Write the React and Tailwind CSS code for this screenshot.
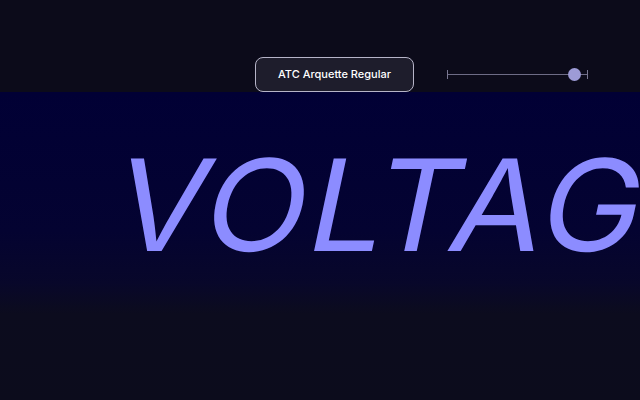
const App = () => {
  return (
    <div className="w-[640px] h-[400px] overflow-hidden bg-[#0c0b1a] font-['Inter','Liberation_Sans',sans-serif]">
      {/* Top toolbar */}
      <div className="h-[92px] flex items-start pt-[57px] pl-[255px]">
        <button className="w-[159px] h-[35px] rounded-lg border border-[#b6b4c8] bg-[#1e1d2c] text-white text-[11px] font-medium flex items-center justify-center">
          ATC Arquette Regular
        </button>
        <div className="ml-[33px] w-[141px] h-[35px] flex items-center">
          <div className="relative w-full h-[9px] flex items-center">
            <div className="w-px h-[9px] bg-[#7a7892]" />
            <div className="flex-1 h-px bg-[#6e6c86]" />
            <div className="w-px h-[9px] bg-[#7a7892]" />
            <div className="absolute left-[121px] w-[13px] h-[13px] rounded-full bg-[#9d9bd6]" />
          </div>
        </div>
      </div>

      {/* Preview */}
      <div className="h-[308px] bg-[linear-gradient(to_bottom,#010035_0%,#040331_45%,#08072a_62%,#0c0c1e_72%,#0c0c1c_100%)] overflow-hidden">
        <div className="pl-[104px] pt-[50px] whitespace-nowrap text-[127px] leading-none text-[#8c8cff] font-['Inter','Liberation_Sans',sans-serif] font-normal tracking-[1.5px]">
          <span className="inline-block origin-bottom-left [transform:skewX(-12deg)_scaleX(1.06)]">VOLTAGE</span>
        </div>
      </div>
    </div>
  );
};

export default App;
